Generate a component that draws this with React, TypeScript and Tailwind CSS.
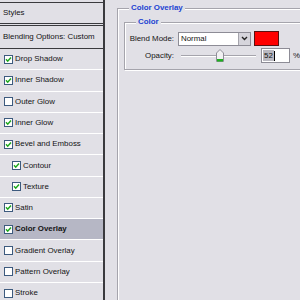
import React from 'react';

type StyleItem = {
  label: string;
  checked: boolean;
  indent?: boolean;
  active?: boolean;
};

const items: StyleItem[] = [
  { label: 'Drop Shadow', checked: true },
  { label: 'Inner Shadow', checked: true },
  { label: 'Outer Glow', checked: false },
  { label: 'Inner Glow', checked: true },
  { label: 'Bevel and Emboss', checked: true },
  { label: 'Contour', checked: true, indent: true },
  { label: 'Texture', checked: true, indent: true },
  { label: 'Satin', checked: true },
  { label: 'Color Overlay', checked: true, active: true },
  { label: 'Gradient Overlay', checked: false },
  { label: 'Pattern Overlay', checked: false },
  { label: 'Stroke', checked: false },
];

const CheckBox: React.FC<{ checked: boolean }> = ({ checked }) => (
  <svg width="9" height="9" viewBox="0 0 9 9" className="shrink-0">
    <rect x="0.5" y="0.5" width="8" height="8" fill="#ffffff" stroke="#3d5a7e" />
    {checked && <path d="M2 4.3 L3.7 6.2 L7 2.4" fill="none" stroke="#1ea81e" strokeWidth="1.5" />}
  </svg>
);

const StyleRow: React.FC<{ item: StyleItem }> = ({ item }) => (
  <div
    className={`h-[21.27px] shrink-0 flex items-center gap-[2px] border-b border-white ${
      item.indent ? 'pl-[12px]' : 'pl-[4px]'
    } ${item.active ? 'bg-[#b6b7c5] font-bold' : ''}`}
  >
    <CheckBox checked={item.checked} />
    <span>{item.label}</span>
  </div>
);

const App: React.FC = () => {
  return (
    <div className="w-[300px] h-[300px] overflow-hidden flex bg-[#e1e0e6] text-[#141414] text-[7.9px] leading-none font-['Liberation_Sans',Arial,sans-serif]">
      {/* styles list */}
      <div className="w-[105px] shrink-0 border-r-2 border-[#3a3a3e] pt-[2px] flex flex-col">
        <div className="h-[22px] shrink-0 border-y border-[#3a3a3e] flex items-center pl-[3px]">Styles</div>
        <div className="h-[1px] shrink-0" />
        <div className="h-[24px] shrink-0 border-y border-[#3a3a3e] flex items-center pl-[3px]">
          Blending Options: Custom
        </div>
        {items.map((item) => (
          <StyleRow key={item.label} item={item} />
        ))}
      </div>

      {/* settings */}
      <div className="flex-1 pl-[12px] pt-[8px]">
        <div className="relative w-[240px] h-[320px] border-l border-t border-[#a5a4ac] shadow-[inset_1px_1px_0_#ffffff] pl-[6px] pt-[13px]">
          <span className="absolute -top-[5px] left-[11px] px-[2px] bg-[#e1e0e6] text-[#2143d2] font-bold">
            Color Overlay
          </span>

          <div className="relative w-[230px] h-[48px] border border-[#a5a4ac] shadow-[inset_1px_1px_0_#ffffff,1px_1px_0_#ffffff] pt-[8px] flex flex-col gap-[2px]">
            <span className="absolute -top-[5px] left-[11px] px-[2px] bg-[#e1e0e6] text-[#2143d2] font-bold">
              Color
            </span>

            <div className="flex items-center h-[15px]">
              <span className="w-[49px] text-right">Blend Mode:</span>
              <div className="ml-[4px] w-[73px] h-[14px] bg-white border border-[#8d8c96] flex items-center">
                <span className="flex-1 pl-[2px]">Normal</span>
                <div className="w-[12px] h-full bg-[#d6d5dc] border-l border-[#a5a4ac] flex items-center justify-center">
                  <svg width="7" height="5" viewBox="0 0 7 5">
                    <path d="M1 1 L3.5 3.5 L6 1" fill="none" stroke="#222" strokeWidth="1.4" />
                  </svg>
                </div>
              </div>
              <div className="ml-[3px] w-[25px] h-[15px] bg-[#ff0000] border border-[#5a1010]" />
            </div>

            <div className="flex items-center h-[15px]">
              <span className="w-[49px] text-right">Opacity:</span>
              <div className="relative ml-[7px] w-[75px] h-[15px] flex items-center">
                <div className="w-full h-[2px] border-t border-[#a5a4ac] bg-white" />
                <svg width="8" height="13" viewBox="0 0 8 13" className="absolute left-[35px] top-[1px]">
                  <path d="M0.5 4 L4 0.5 L7.5 4 L7.5 12.5 L0.5 12.5 Z" fill="#f1f1f3" stroke="#8f8e98" />
                  <rect x="1" y="10" width="6" height="2.5" fill="#20b020" />
                </svg>
              </div>
              <div className="ml-[5px] w-[29px] h-[15px] bg-white border border-[#8d8c96] flex items-center pl-[1px]">
                <span className="bg-[#b9b8c0] px-[1px] py-[2px]">52</span>
                <span className="w-[1px] h-[10px] bg-black" />
              </div>
              <span className="ml-[3px]">%</span>
            </div>
          </div>
        </div>
      </div>
    </div>
  );
};

export default App;
